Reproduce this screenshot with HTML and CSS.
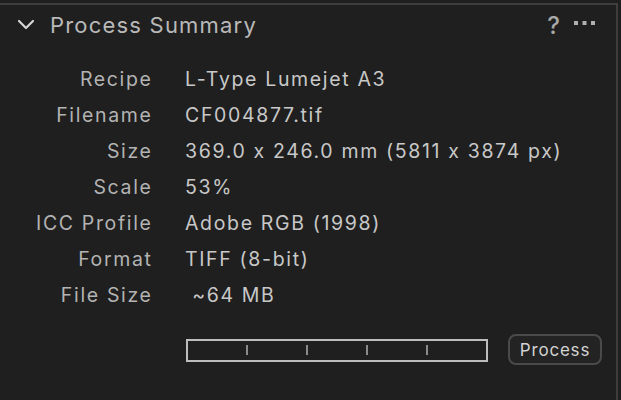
FILE: index.html
```html
<!DOCTYPE html>
<html>
<head>
<meta charset="utf-8">
<link rel="stylesheet" href="styles.css">
</head>
<body>
<div class="panel">
  <div class="header">
    <svg class="chevron" width="18" height="12" viewBox="0 0 18 12"><path d="M2 2 L9 9 L16 2" fill="none" stroke="#d6d6d6" stroke-width="2.2" stroke-linecap="round" stroke-linejoin="round"/></svg>
    <div class="title">Process Summary</div>
    <div class="help">?</div>
    <svg class="more" width="22" height="6" viewBox="0 0 22 6"><rect x="0" y="0" width="4" height="4" fill="#b0b0b0"/><rect x="8.5" y="0" width="4" height="4" fill="#b0b0b0"/><rect x="17" y="0" width="4" height="4" fill="#b0b0b0"/></svg>
  </div>
  <div class="rows">
    <div class="label">Recipe</div><div class="value">L-Type Lumejet A3</div>
    <div class="label">Filename</div><div class="value">CF004877.tif</div>
    <div class="label">Size</div><div class="value">369.0 x 246.0 mm (5811 x 3874 px)</div>
    <div class="label">Scale</div><div class="value">53%</div>
    <div class="label">ICC Profile</div><div class="value">Adobe RGB (1998)</div>
    <div class="label">Format</div><div class="value">TIFF (8-bit)</div>
    <div class="label">File Size</div><div class="value">&nbsp;~64 MB</div>
  </div>
  <div class="footer">
    <div class="progress">
      <span class="seg"></span><span class="seg"></span><span class="seg"></span><span class="seg"></span><span class="seg last"></span>
    </div>
    <div class="button">Process</div>
  </div>
</div>
</body>
</html>
```
FILE: styles.css
```css
html, body {
  margin: 0;
  padding: 0;
  background: #1f1f1f;
  width: 621px;
  height: 400px;
  overflow: hidden;
}
body {
  font-family: Inter, "Noto Sans", sans-serif;
  font-feature-settings: "calt" 0;
  color: #c4c4c4;
}
.panel {
  box-sizing: border-box;
  width: 618px;
  height: 400px;
  margin-top: 3px;
  border-top: 2px solid #3e3e3e;
  border-right: 2px solid #3e3e3e;
  background: #1f1f1f;
}
.header {
  display: flex;
  align-items: center;
  height: 40px;
  padding-left: 17px;
}
.title {
  margin-left: 15px;
  font-size: 22px;
  color: #b9b9b9;
  letter-spacing: 1.2px;
  flex: 1;
}
.help {
  font-size: 24px;
  font-weight: 500;
  color: #a8a8a8;
  margin-right: 14px;
}
.more {
  margin-right: 20px;
  margin-top: -3px;
}
.rows {
  display: grid;
  grid-template-columns: 151px auto;
  column-gap: 34px;
  margin-top: 16px;
  font-size: 19.5px;
  letter-spacing: 1.65px;
  line-height: 36px;
}
.label {
  text-align: right;
  color: #b3b3b3;
  margin-right: -1.6px;
}
.value {
  color: #c8c8c8;
}
.footer {
  display: flex;
  align-items: center;
  margin-top: 21px;
  padding-left: 186px;
}
.progress {
  box-sizing: border-box;
  width: 302px;
  height: 23px;
  margin-top: 1px;
  border: 2px solid #bdbdbd;
  display: flex;
  align-items: center;
}
.seg {
  flex: 1;
  height: 10px;
  border-right: 2px solid #8a8a8a;
}
.seg.last {
  border-right: none;
}
.button {
  box-sizing: border-box;
  margin-left: 20px;
  height: 31px;
  width: 94px;
  border: 2px solid #4a4a4a;
  border-radius: 8px;
  display: flex;
  align-items: center;
  justify-content: center;
  font-size: 17px;
  letter-spacing: 0.8px;
  color: #d2d2d2;
  background: #232323;
}
```
